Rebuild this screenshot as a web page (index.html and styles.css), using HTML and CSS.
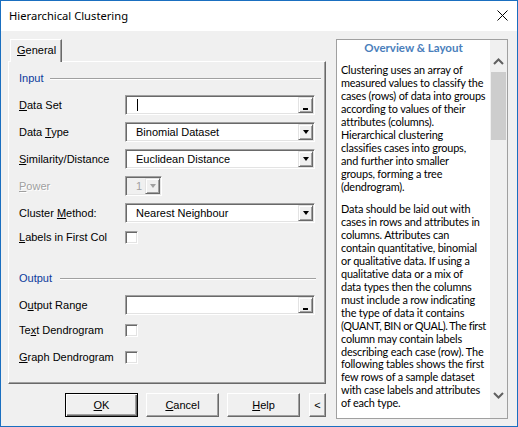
FILE: index.html
```html
<!DOCTYPE html>
<html>
<head>
<meta charset="utf-8">
<title>Hierarchical Clustering</title>
<link rel="stylesheet" href="styles.css">
</head>
<body>
<div class="window">
  <div class="titlebar">
    <span class="title">Hierarchical Clustering</span>
    <svg class="close" width="11" height="11" viewBox="0 0 11 11"><path d="M0.5 0.5 L10.5 10.5 M10.5 0.5 L0.5 10.5" stroke="#000" stroke-width="1" fill="none"/></svg>
  </div>
  <div class="client">
    <div class="leftcol">
      <div class="tabs"><div class="tab"><u>G</u>eneral</div></div>
      <div class="panel">
        <div class="group g-input"><span class="glabel">Input</span><span class="gline"></span></div>
        <div class="row r-dataset"><span class="label"><u>D</u>ata Set</span>
          <div class="field"><span class="fval"><span class="caret"></span></span><span class="sbtn"><span class="dash"></span></span></div></div>
        <div class="row r-next"><span class="label">Data <u>T</u>ype</span>
          <div class="field"><span class="fval">Binomial Dataset</span><span class="sbtn"><span class="arrow"></span></span></div></div>
        <div class="row r-next"><span class="label"><u>S</u>imilarity/Distance</span>
          <div class="field"><span class="fval">Euclidean Distance</span><span class="sbtn"><span class="arrow"></span></span></div></div>
        <div class="row r-next"><span class="label disabled"><u>P</u>ower</span>
          <div class="field small dis"><span class="fval">1</span><span class="sbtn"><span class="arrow"></span></span></div></div>
        <div class="row r-next"><span class="label">Cluster <u>M</u>ethod:</span>
          <div class="field"><span class="fval">Nearest Neighbour</span><span class="sbtn"><span class="arrow"></span></span></div></div>
        <div class="row r-labels"><span class="label"><u>L</u>abels in First Col</span><span class="check"></span></div>

        <div class="group g-output"><span class="glabel">Output</span><span class="gline"></span></div>
        <div class="row r-outrange"><span class="label">O<u>u</u>tput Range</span>
          <div class="field"><span class="fval"></span><span class="sbtn"><span class="dash"></span></span></div></div>
        <div class="row r-textd"><span class="label">Te<u>x</u>t Dendrogram</span><span class="check"></span></div>
        <div class="row r-graphd"><span class="label"><u>G</u>raph Dendrogram</span><span class="check"></span></div>
      </div>
      <div class="buttons">
        <div class="btn default"><u>O</u>K</div>
        <div class="btn"><u>C</u>ancel</div>
        <div class="btn"><u>H</u>elp</div>
        <div class="btn narrow">&lt;</div>
      </div>
    </div>
    <div class="info">
      <div class="infotext">
        <div class="infotitle">Overview &amp; Layout</div>
        <p>Clustering uses an array of<br>measured values to classify the<br>cases (rows) of data into groups<br>according to values of their<br>attributes (columns).<br>Hierarchical clustering<br>classifies cases into groups,<br>and further into smaller<br>groups, forming a tree<br>(dendrogram).</p>
        <p>Data should be laid out with<br>cases in rows and attributes in<br>columns. Attributes can<br>contain quantitative, binomial<br>or qualitative data. If using a<br>qualitative data or a mix of<br>data types then the columns<br>must include a row indicating<br>the type of data it contains<br><span class="tight">(QUANT, BIN or QUAL). The first</span><br>column may contain labels<br>describing each case (row). The<br>following tables shows the first<br>few rows of a sample dataset<br>with case labels and attributes<br>of each type.</p>
      </div>
      <div class="scrollbar">
        <svg class="chev up" width="11" height="7" viewBox="0 0 11 7"><path d="M1 6 L5.5 1.5 L10 6" stroke="#606060" stroke-width="2" fill="none"/></svg>
        <div class="thumb"></div>
        <div class="track"></div>
        <svg class="chev down" width="11" height="7" viewBox="0 0 11 7"><path d="M1 1 L5.5 5.5 L10 1" stroke="#606060" stroke-width="2" fill="none"/></svg>
      </div>
    </div>
  </div>
</div>
</body>
</html>
```
FILE: styles.css
```css
html, body {
  margin: 0;
  padding: 0;
  background: #f0f0f0;
}
body {
  font-family: "Liberation Sans", Arial, sans-serif;
  font-size: 11px;
  color: #000;
}
.window {
  width: 518px;
  height: 427px;
  box-sizing: border-box;
  border: 1px solid #1a6fc0;
  background: #f0f0f0;
  display: flex;
  flex-direction: column;
}
.titlebar {
  height: 30px;
  flex: none;
  background: #fff;
  display: flex;
  align-items: center;
  padding-left: 8px;
}
.title {
  font-family: "Noto Sans", "Open Sans", sans-serif;
  font-size: 11.2px;
  color: #000;
  margin-top: -1px;
}
.close {
  margin-left: auto;
  margin-right: 9px;
  margin-top: -1px;
}
.client {
  flex: 1;
  display: flex;
  padding: 8px 9px 0 7px;
}
.leftcol {
  width: 318px;
  flex: none;
  display: flex;
  flex-direction: column;
}
.tabs {
  height: 22px;
  display: flex;
  position: relative;
  z-index: 2;
}
.tab {
  margin-left: 2px;
  width: 52px;
  height: 23px;
  box-sizing: border-box;
  background: #f0f0f0;
  border-top: 1px solid #fff;
  border-left: 1px solid #fff;
  border-right: 1px solid #696969;
  box-shadow: inset -1px 0 #a0a0a0;
  padding: 3px 0 0 6px;
  line-height: 14px;
}
.panel {
  height: 323px;
  box-sizing: border-box;
  border-top: 1px solid #fff;
  border-left: 1px solid #fff;
  border-right: 1px solid #696969;
  border-bottom: 1px solid #696969;
  box-shadow: inset -1px -1px #a0a0a0;
  padding: 0 4px 0 10px;
  display: flex;
  flex-direction: column;
}
.group {
  height: 14px;
  display: flex;
  align-items: center;
}
.g-input { margin-top: 9px; }
.g-output { margin-top: 24px; }
.glabel {
  color: #0b3a9c;
  line-height: 14px;
}
.gline {
  flex: 1;
  height: 1px;
  background: #a0a0a0;
  border-bottom: 1px solid #fff;
  margin-left: 7px;
  margin-top: 1px;
}
.g-output .gline { margin-left: 8px; margin-right: 5px; }
.row {
  height: 20px;
  display: flex;
  align-items: center;
}
.r-dataset { margin-top: 10px; }
.r-next { margin-top: 7px; }
.r-labels { margin-top: 4px; }
.r-outrange { margin-top: 10px; }
.r-textd { margin-top: 5px; }
.r-graphd { margin-top: 7px; }
.label {
  width: 106px;
  flex: none;
  white-space: nowrap;
  line-height: 14px;
}
.label.disabled {
  color: #a0a0a0;
  text-shadow: 1px 1px #fff;
}
.field {
  width: 190px;
  height: 20px;
  box-sizing: border-box;
  background: #fff;
  border-top: 1px solid #a0a0a0;
  border-left: 1px solid #a0a0a0;
  border-right: 1px solid #fff;
  border-bottom: 1px solid #fff;
  box-shadow: inset 1px 1px #696969, inset -1px -1px #e3e3e3;
  display: flex;
  align-items: stretch;
}
.field.small {
  width: 37px;
}
.field.dis {
  background: #f0f0f0;
  color: #a0a0a0;
}
.fval {
  flex: 1;
  padding-left: 10px;
  line-height: 18px;
  white-space: nowrap;
  display: flex;
  align-items: center;
}
.caret {
  width: 1px;
  height: 12px;
  background: #000;
  margin-left: 1px;
}
.sbtn {
  width: 15px;
  flex: none;
  margin: 1px 1px 1px 0;
  box-sizing: border-box;
  background: #f0f0f0;
  border-top: 1px solid #e3e3e3;
  border-left: 1px solid #e3e3e3;
  border-right: 1px solid #696969;
  border-bottom: 1px solid #696969;
  box-shadow: inset 1px 1px #fff, inset -1px -1px #a0a0a0;
  display: flex;
  align-items: center;
  justify-content: center;
}
.arrow {
  width: 0;
  height: 0;
  border-left: 3.5px solid transparent;
  border-right: 3.5px solid transparent;
  border-top: 4px solid #000;
}
.dis .arrow {
  border-top-color: #a0a0a0;
}
.dash {
  width: 5px;
  height: 2px;
  background: #000;
  margin-top: 8px;
}
.check {
  width: 13px;
  height: 13px;
  box-sizing: border-box;
  background: #fff;
  border-top: 1px solid #a0a0a0;
  border-left: 1px solid #a0a0a0;
  border-right: 1px solid #fff;
  border-bottom: 1px solid #fff;
  box-shadow: inset 1px 1px #696969, inset -1px -1px #e3e3e3;
}
.buttons {
  margin-top: 9px;
  padding-left: 57px;
  display: flex;
  gap: 8px;
}
.btn {
  width: 73px;
  height: 24px;
  box-sizing: border-box;
  background: #f0f0f0;
  border-top: 1px solid #fff;
  border-left: 1px solid #fff;
  border-right: 1px solid #696969;
  border-bottom: 1px solid #696969;
  box-shadow: inset -1px -1px #a0a0a0;
  display: flex;
  align-items: center;
  justify-content: center;
  line-height: 14px;
}
.btn.default {
  border: 1px solid #000;
  box-shadow: inset 1px 1px #fff, inset -1px -1px #696969, inset -2px -2px #a0a0a0;
}
.btn.narrow {
  width: 17px;
  margin-left: 1px;
}
.info {
  margin-left: 10px;
  width: 172px;
  height: 380px;
  box-sizing: border-box;
  border: 1px solid #a0a0a0;
  display: flex;
  overflow: hidden;
}
.infotext {
  flex: 1;
  background: #fff;
  padding: 2px 0 0 4px;
  font-family: Lato, "Open Sans", sans-serif;
  font-size: 10.9px;
  letter-spacing: -0.17px;
  line-height: 12.95px;
  white-space: nowrap;
  overflow: hidden;
  color: #000;
}
.infotext .tight {
  letter-spacing: -0.4px;
}
.infotitle {
  text-align: center;
  font-weight: bold;
  color: #4a7ebb;
  font-size: 11.5px;
  letter-spacing: 0;
  line-height: 13px;
  padding-right: 4px;
  margin-top: -1px;
}
.infotext p {
  margin: 10px 0 0 0;
}
.infotext p + p {
  margin-top: 9.5px;
}
.scrollbar {
  width: 17px;
  flex: none;
  background: #f0f0f0;
  display: flex;
  flex-direction: column;
  align-items: center;
}
.chev.up {
  margin-top: 18px;
}
.thumb {
  width: 15px;
  height: 68px;
  background: #cdcdcd;
  margin-top: 7px;
}
.track {
  flex: 1;
}
.chev.down {
  margin-bottom: 19px;
}
```
